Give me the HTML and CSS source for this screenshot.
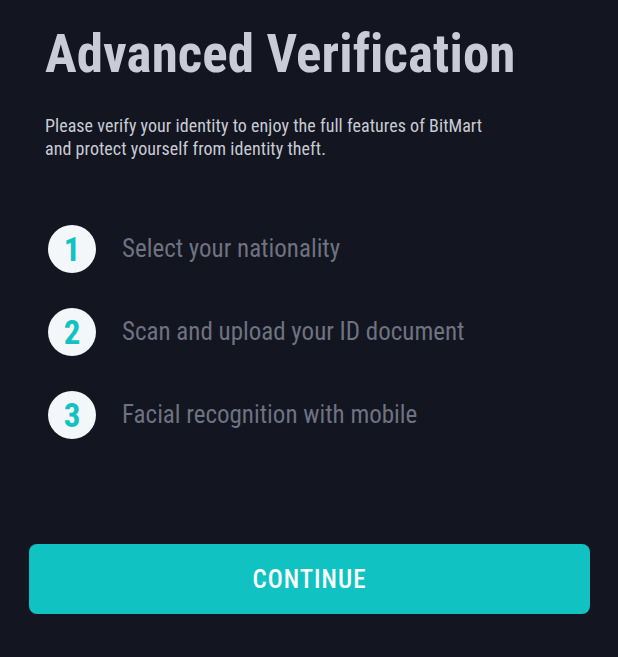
FILE: index.html
```html
<!DOCTYPE html>
<html lang="en">
<head>
    <meta charset="UTF-8">
    <meta name="viewport" content="width=device-width, initial-scale=1.0">
    <title>Advanced Verification</title>
    <link rel="stylesheet" href="styles.css">
</head>
<body>
    <div class="verify-container">
        <div class="verify-intro">
            <h1 class="verify-title">Advanced Verification</h1>
            <p class="verify-desc">Please verify your identity to enjoy the full features of BitMart and protect yourself from identity theft.</p>
        </div>

        <ul class="step-list">
            <li class="step">
                <span class="step-num">1</span>
                <span class="step-text">Select your nationality</span>
            </li>
            <li class="step">
                <span class="step-num">2</span>
                <span class="step-text">Scan and upload your ID document</span>
            </li>
            <li class="step">
                <span class="step-num">3</span>
                <span class="step-text">Facial recognition with mobile</span>
            </li>
        </ul>

        <button class="continue-btn">CONTINUE</button>
    </div>
</body>
</html>
```
FILE: styles.css
```css
* {
    box-sizing: border-box;
}
body {
    font-family: 'Roboto Condensed', 'Roboto', sans-serif;
    margin: 0;
    height: 100vh;
    background-color: #131520;
}
.verify-container {
    display: flex;
    flex-direction: column;
    padding: 22px 28px 0 29px;
}
.verify-intro {
    padding-left: 16px;
}
.verify-title {
    margin: 0;
    font-size: 53px;
    line-height: 64px;
    font-weight: 700;
    letter-spacing: 0.1px;
    color: #c9ccd7;
}
.verify-desc {
    max-width: 445px;
    margin: 28px 0 0;
    font-size: 18px;
    line-height: 23px;
    letter-spacing: 0.05px;
    color: #c8cbd4;
}
.step-list {
    list-style: none;
    margin: 65px 0 0;
    padding: 0 0 0 19px;
    display: flex;
    flex-direction: column;
    gap: 35px;
}
.step {
    display: flex;
    align-items: center;
    gap: 26px;
    height: 48px;
}
.step-num {
    width: 48px;
    height: 48px;
    border-radius: 50%;
    background-color: #f3f7fa;
    color: #12c2c2;
    font-size: 33px;
    font-weight: 700;
    display: flex;
    align-items: center;
    justify-content: center;
    flex-shrink: 0;
}
.step-text {
    font-size: 25px;
    line-height: 30px;
    color: #6e7281;
}
.continue-btn {
    margin-top: 105px;
    height: 70px;
    border: none;
    border-radius: 8px;
    background-color: #10c2c2;
    color: #ffffff;
    font-family: 'Roboto Condensed', 'Roboto', sans-serif;
    font-size: 25px;
    font-weight: 500;
    letter-spacing: 1px;
    cursor: pointer;
}
```
